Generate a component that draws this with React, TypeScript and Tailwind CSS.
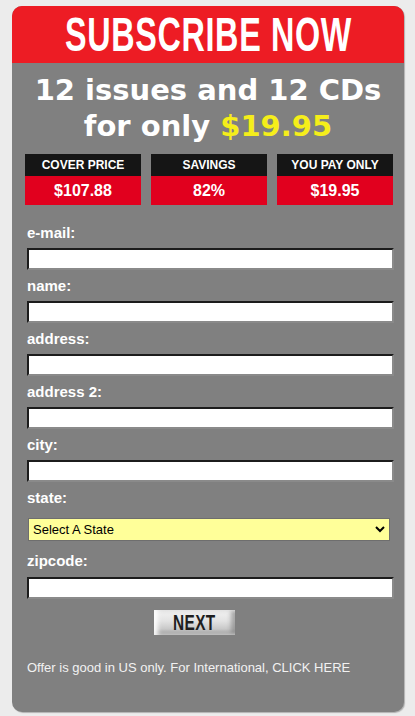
import { useState } from 'react';

const fields = [
  { id: 'email', label: 'e-mail:' },
  { id: 'name', label: 'name:' },
  { id: 'address', label: 'address:' },
  { id: 'address2', label: 'address 2:' },
  { id: 'city', label: 'city:' },
];

const prices = [
  { title: 'COVER PRICE', value: '$107.88' },
  { title: 'SAVINGS', value: '82%' },
  { title: 'YOU PAY ONLY', value: '$19.95' },
];

const inputClass =
  'block w-[367px] h-[22px] bg-white border-2 border-t-[#1c1c1c] border-l-[#1c1c1c] border-r-[#8a8a8a] border-b-[#8a8a8a] outline-none px-1 text-[13px] text-black';

export default function App() {
  const [values, setValues] = useState<Record<string, string>>({});
  const [state, setState] = useState('');

  return (
    <div className="min-h-[716px] bg-[#ececec] pt-[6px] pl-[12px] font-['Liberation_Sans',Arial,sans-serif]">
      <div className="w-[392px] rounded-[10px] bg-[#808080] shadow-[1px_1px_1px_rgba(0,0,0,0.25)] pb-[36px]">
        {/* header */}
        <div className="h-[57px] rounded-t-[10px] bg-[#ed1c24] flex items-center justify-center overflow-hidden">
          <h1 className="text-white font-bold text-[49px] leading-none scale-x-[0.66] whitespace-nowrap tracking-[1px]">
            SUBSCRIBE NOW
          </h1>
        </div>

        {/* headline */}
        <div className="pt-[9px] text-center text-white font-['DejaVu_Sans',sans-serif] font-bold text-[29px] leading-[36px]">
          <div>12 issues and 12 CDs</div>
          <div>
            for only <span className="text-[#f5ee1a]">$19.95</span>
          </div>
        </div>

        {/* prices */}
        <div className="mt-[10px] pl-[13px] flex gap-[10px]">
          {prices.map((p) => (
            <div key={p.title} className="w-[116px] text-white text-center font-bold">
              <div className="h-[22px] bg-[#151515] text-[12px] leading-[22px]">{p.title}</div>
              <div className="h-[29px] bg-[#e1001e] text-[16px] leading-[29px]">{p.value}</div>
            </div>
          ))}
        </div>

        {/* form */}
        <form className="mt-[18px] pl-[15px]" onSubmit={(e) => e.preventDefault()}>
          {fields.map((f) => (
            <div key={f.id} className="mb-[6px]">
              <label htmlFor={f.id} className="block text-white font-bold text-[15px] leading-[20px]">
                {f.label}
              </label>
              <input
                id={f.id}
                type="text"
                value={values[f.id] || ''}
                onChange={(e) => setValues({ ...values, [f.id]: e.target.value })}
                className={`${inputClass} mt-[5px]`}
              />
            </div>
          ))}

          <label htmlFor="state" className="block text-white font-bold text-[15px] leading-[20px]">
            state:
          </label>
          <div className="relative mt-[10px] ml-[1px] w-[362px]">
            <select
              id="state"
              value={state}
              onChange={(e) => setState(e.target.value)}
              className="block w-full h-[23px] appearance-none bg-[#ffff99] border border-[#6e6e6e] pl-[4px] text-[13px] text-black outline-none"
            >
              <option value="">Select A State</option>
              <option value="AL">Alabama</option>
              <option value="CA">California</option>
              <option value="NY">New York</option>
              <option value="TX">Texas</option>
            </select>
            <svg
              className="absolute right-[5px] top-[7px] pointer-events-none"
              width="10"
              height="8"
              viewBox="0 0 10 8"
            >
              <path d="M1 2 L5 6 L9 2" stroke="#000" strokeWidth="2" fill="none" />
            </svg>
          </div>

          <label htmlFor="zipcode" className="block mt-[10px] text-white font-bold text-[15px] leading-[20px]">
            zipcode:
          </label>
          <input
            id="zipcode"
            type="text"
            value={values.zipcode || ''}
            onChange={(e) => setValues({ ...values, zipcode: e.target.value })}
            className={`${inputClass} mt-[6px]`}
          />

          <div className="mt-[11px] pl-[127px]">
            <button
              type="submit"
              className="w-[81px] h-[25px] flex items-center justify-center bg-[linear-gradient(180deg,#f4f4f4_0%,#e2e2e2_45%,#c9c9c9_75%,#9c9c9c_100%)] shadow-[inset_4px_0_4px_rgba(255,255,255,0.9),inset_-4px_0_4px_rgba(120,120,120,0.6)] overflow-hidden"
            >
              <span className="font-bold text-[22px] leading-none text-[#1e1e1e] scale-x-[0.7] tracking-[0.5px]">
                NEXT
              </span>
            </button>
          </div>
        </form>

        <p className="mt-[25px] pl-[15px] text-[13px] leading-[16px] text-[#f2f2f2]">
          Offer is good in US only. For International, CLICK HERE
        </p>
      </div>
    </div>
  );
}
